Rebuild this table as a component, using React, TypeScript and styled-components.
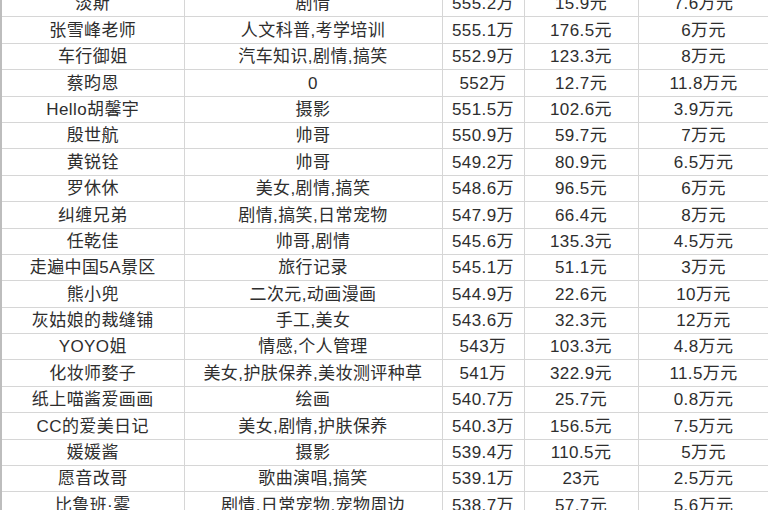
import React from "react";
import styled, { createGlobalStyle } from "styled-components";

const Global = createGlobalStyle`
  html, body { margin: 0; padding: 0; background: #ffffff; overflow: hidden; }
  #root { width: 768px; height: 510px; }
`;

const Frame = styled.div`
  width: 768px;
  height: 510px;
  overflow: hidden;
  background: #fff;
  box-sizing: border-box;
`;

const Sheet = styled.table`
  border-collapse: collapse;
  table-layout: fixed;
  width: 768px;
  margin-top: -10px;
  font-family: "Liberation Sans", "Noto Sans CJK SC", sans-serif;
  font-size: 17px;
  color: #2e2e2e;
`;

const Col = styled.col<{ $w: number }>`
  width: ${(p) => p.$w}px;
`;

const Row = styled.tr`
  height: 26.4px;
`;

const Cell = styled.td<{ $first?: boolean }>`
  border: 1px solid #d6d6d6;
  border-left: ${(p) => (p.$first ? "2px solid #bdbdbd" : "1px solid #d6d6d6")};
  padding: 0 0 1px;
  text-align: center;
  vertical-align: bottom;
  white-space: nowrap;
  overflow: visible;
  line-height: 22px;
  letter-spacing: 0.4px;
`;

type R = [string, string, string, string, string];

const rows: R[] = [
  ["淡斯", "剧情", "555.2万", "15.9元", "7.6万元"],
  ["张雪峰老师", "人文科普,考学培训", "555.1万", "176.5元", "6万元"],
  ["车行御姐", "汽车知识,剧情,搞笑", "552.9万", "123.3元", "8万元"],
  ["蔡昀恩", "0", "552万", "12.7元", "11.8万元"],
  ["Hello胡馨宇", "摄影", "551.5万", "102.6元", "3.9万元"],
  ["殷世航", "帅哥", "550.9万", "59.7元", "7万元"],
  ["黄锐铨", "帅哥", "549.2万", "80.9元", "6.5万元"],
  ["罗休休", "美女,剧情,搞笑", "548.6万", "96.5元", "6万元"],
  ["纠缠兄弟", "剧情,搞笑,日常宠物", "547.9万", "66.4元", "8万元"],
  ["任乾佳", "帅哥,剧情", "545.6万", "135.3元", "4.5万元"],
  ["走遍中国5A景区", "旅行记录", "545.1万", "51.1元", "3万元"],
  ["熊小兜", "二次元,动画漫画", "544.9万", "22.6元", "10万元"],
  ["灰姑娘的裁缝铺", "手工,美女", "543.6万", "32.3元", "12万元"],
  ["YOYO姐", "情感,个人管理", "543万", "103.3元", "4.8万元"],
  ["化妆师婺子", "美女,护肤保养,美妆测评种草", "541万", "322.9元", "11.5万元"],
  ["纸上喵酱爱画画", "绘画", "540.7万", "25.7元", "0.8万元"],
  ["CC的爱美日记", "美女,剧情,护肤保养", "540.3万", "156.5元", "7.5万元"],
  ["媛媛酱", "摄影", "539.4万", "110.5元", "5万元"],
  ["愿音改哥", "歌曲演唱,搞笑", "539.1万", "23元", "2.5万元"],
  ["比鲁班·雾", "剧情,日常宠物,宠物周边", "538.7万", "57.7元", "5.6万元"],
];

const widths = [183, 258, 82, 114, 131];

export default function App() {
  return (
    <>
      <Global />
      <Frame>
        <Sheet>
          <colgroup>
            {widths.map((w, i) => (
              <Col key={i} $w={w} />
            ))}
          </colgroup>
          <tbody>
            {rows.map((r, i) => (
              <Row key={i}>
                {r.map((c, j) => (
                  <Cell key={j} $first={j === 0}>
                    {c}
                  </Cell>
                ))}
              </Row>
            ))}
          </tbody>
        </Sheet>
      </Frame>
    </>
  );
}
